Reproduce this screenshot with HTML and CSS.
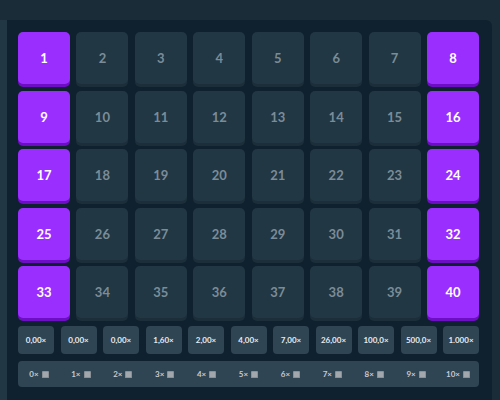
FILE: index.html
```html
<!DOCTYPE html>
<html>
<head>
<meta charset="utf-8">
<link rel="stylesheet" href="styles.css">
</head>
<body>
<div class="topbar"></div>
<div class="main">
  <div class="strip"></div>
  <div class="panel">
    <div class="board">
      <div class="tile on">1</div><div class="tile">2</div><div class="tile">3</div><div class="tile">4</div><div class="tile">5</div><div class="tile">6</div><div class="tile">7</div><div class="tile on">8</div>
      <div class="tile on">9</div><div class="tile">10</div><div class="tile">11</div><div class="tile">12</div><div class="tile">13</div><div class="tile">14</div><div class="tile">15</div><div class="tile on">16</div>
      <div class="tile on">17</div><div class="tile">18</div><div class="tile">19</div><div class="tile">20</div><div class="tile">21</div><div class="tile">22</div><div class="tile">23</div><div class="tile on">24</div>
      <div class="tile on">25</div><div class="tile">26</div><div class="tile">27</div><div class="tile">28</div><div class="tile">29</div><div class="tile">30</div><div class="tile">31</div><div class="tile on">32</div>
      <div class="tile on">33</div><div class="tile">34</div><div class="tile">35</div><div class="tile">36</div><div class="tile">37</div><div class="tile">38</div><div class="tile">39</div><div class="tile on">40</div>
    </div>
    <div class="mults">
      <div class="mult">0,00×</div><div class="mult">0,00×</div><div class="mult">0,00×</div><div class="mult">1,60×</div><div class="mult">2,00×</div><div class="mult">4,00×</div><div class="mult">7,00×</div><div class="mult">26,00×</div><div class="mult">100,0×</div><div class="mult">500,0×</div><div class="mult">1.000×</div>
    </div>
    <div class="hits">
      <div class="hit"><span>0×</span><i class="sq"></i></div>
      <div class="hit"><span>1×</span><i class="sq"></i></div>
      <div class="hit"><span>2×</span><i class="sq"></i></div>
      <div class="hit"><span>3×</span><i class="sq"></i></div>
      <div class="hit"><span>4×</span><i class="sq"></i></div>
      <div class="hit"><span>5×</span><i class="sq"></i></div>
      <div class="hit"><span>6×</span><i class="sq"></i></div>
      <div class="hit"><span>7×</span><i class="sq"></i></div>
      <div class="hit"><span>8×</span><i class="sq"></i></div>
      <div class="hit"><span>9×</span><i class="sq"></i></div>
      <div class="hit"><span>10×</span><i class="sq"></i></div>
    </div>
  </div>
  <div class="rside"></div>
</div>
</body>
</html>
```
FILE: styles.css
```css
html, body {
  margin: 0;
  padding: 0;
  background: #1a2c38;
  font-family: Lato, "Liberation Sans", sans-serif;
  width: 500px;
  height: 400px;
  overflow: hidden;
}
.topbar {
  height: 20px;
}
.main {
  display: flex;
  height: 380px;
}
.strip {
  width: 7px;
  background: #213743;
}
.panel {
  width: 485px;
  box-sizing: border-box;
  background: #0f212e;
  border-top-right-radius: 6px;
  padding: 12px 13px 0 11px;
}
.rside {
  flex: 1;
}
.board {
  display: grid;
  grid-template-columns: repeat(8, 1fr);
  grid-auto-rows: 52px;
  gap: 6.5px;
}
.tile {
  background: #213743;
  border-radius: 5px;
  box-shadow: 0 3px 0 #1b2e3a;
  display: flex;
  align-items: center;
  justify-content: center;
  font-weight: 700;
  font-size: 13px;
  color: #7b8c99;
}
.tile.on {
  background: #9a2eff;
  box-shadow: 0 3px 0 #6d0dc4;
  color: #ffffff;
}
.mults {
  margin-top: 8px;
  display: grid;
  grid-template-columns: repeat(11, 1fr);
  gap: 6.5px;
}
.mult {
  height: 28px;
  background: #2f4553;
  border-radius: 4px;
  display: flex;
  align-items: center;
  justify-content: center;
  font-size: 8px;
  font-weight: 700;
  color: #e6ebf1;
}
.hits {
  margin-top: 7px;
  height: 26px;
  background: #2f4553;
  border-radius: 4px;
  display: grid;
  grid-template-columns: repeat(11, 1fr);
}
.hit {
  display: flex;
  align-items: center;
  justify-content: center;
  gap: 3px;
  font-size: 8px;
  font-weight: 700;
  color: #c3cbd8;
}
.sq {
  display: block;
  width: 7px;
  height: 7px;
  border-radius: 1.5px;
  background: #a2a7ad;
  box-shadow: inset 0 0 0 1px #8a9096;
}
```
